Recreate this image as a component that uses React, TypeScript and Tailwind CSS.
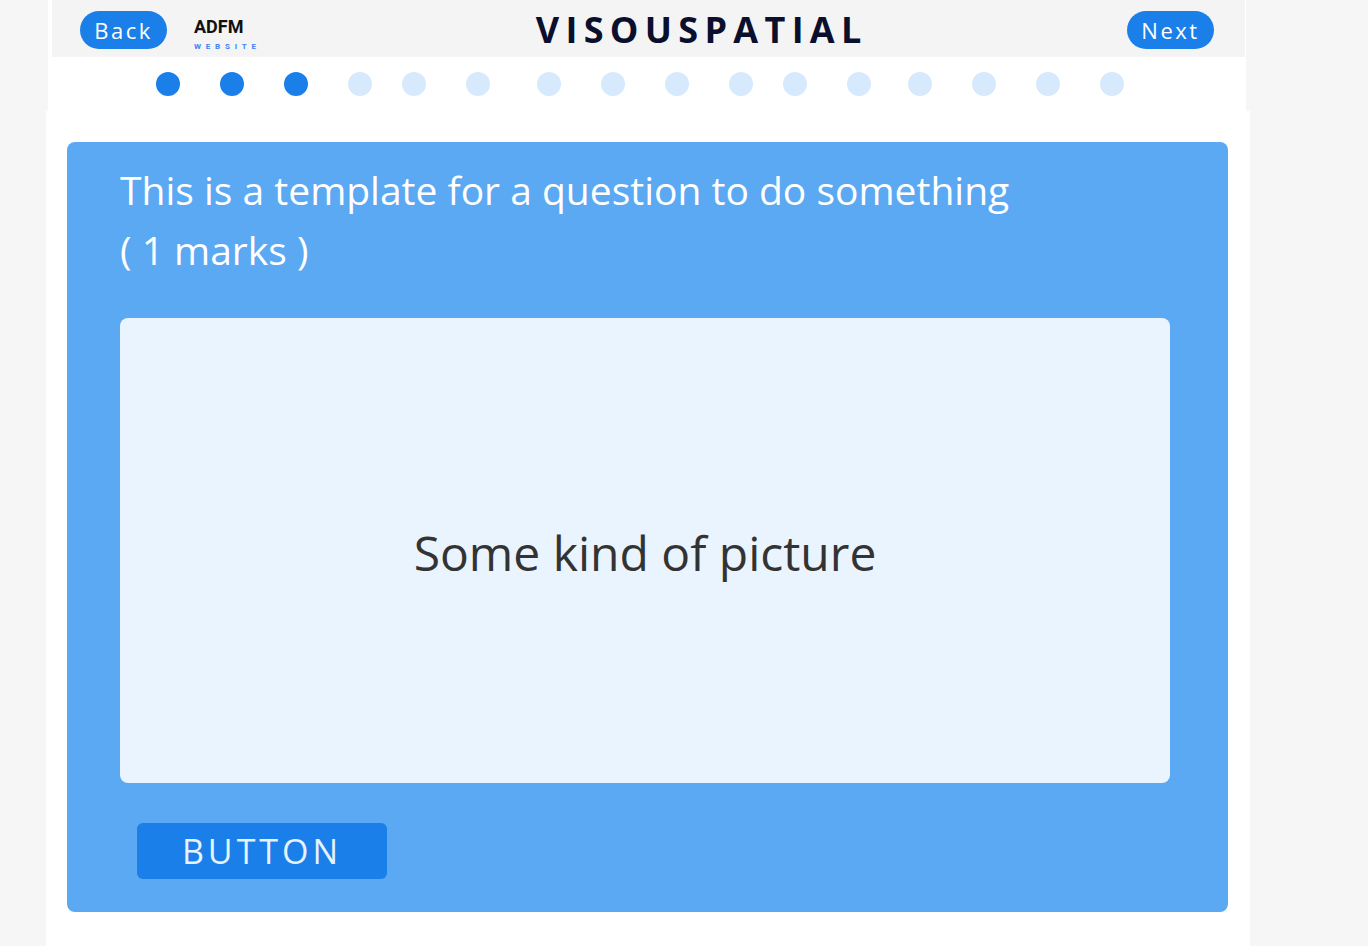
const dots = [
  { on: true, gap: "ml-0" },
  { on: true, gap: "ml-[40px]" },
  { on: true, gap: "ml-[40px]" },
  { on: false, gap: "ml-[40px]" },
  { on: false, gap: "ml-[30px]" },
  { on: false, gap: "ml-[40px]" },
  { on: false, gap: "ml-[47px]" },
  { on: false, gap: "ml-[40px]" },
  { on: false, gap: "ml-[40px]" },
  { on: false, gap: "ml-[40px]" },
  { on: false, gap: "ml-[30px]" },
  { on: false, gap: "ml-[40px]" },
  { on: false, gap: "ml-[37px]" },
  { on: false, gap: "ml-[40px]" },
  { on: false, gap: "ml-[40px]" },
  { on: false, gap: "ml-[40px]" },
];

const sans = "font-['Open_Sans',sans-serif]";

export default function App() {
  return (
    <div className="min-h-screen w-full bg-[#f6f6f6]">
      {/* Top: header + progress */}
      <div className="ml-[48px] w-[1198px] bg-white">
        <header className="ml-[4px] flex h-[57px] w-[1193px] items-center bg-[#f4f4f4]">
          <button
            className={`ml-[28px] mt-[3px] h-[38px] w-[87px] rounded-full bg-[#1a7fe8] text-[22px] tracking-[2.5px] text-white ${sans}`}
          >
            Back
          </button>
          <div className="ml-[27px] flex flex-col pt-[12px] font-['Roboto',sans-serif]">
            <span className="text-[18px] font-bold leading-[20px] text-[#111]">ADFM</span>
            <span className="mt-[5px] text-[8px] font-bold leading-[10px] tracking-[4.8px] text-[#3b82f6]">
              WEBSITE
            </span>
          </div>
          <h1
            className={`ml-[275px] mt-[2px] text-[36px] font-bold leading-none tracking-[6.3px] text-[#0b0f2e] ${sans}`}
          >
            VISOUSPATIAL
          </h1>
          <button
            className={`ml-auto mr-[31px] mt-[3px] h-[38px] w-[87px] rounded-full bg-[#1a7fe8] text-[22px] tracking-[2.5px] text-white ${sans}`}
          >
            Next
          </button>
        </header>
        <div className="flex h-[54px] items-center pl-[108px]">
          {dots.map((d, i) => (
            <span
              key={i}
              className={`h-[24px] w-[24px] rounded-full ${d.gap} ${d.on ? "bg-[#1a7fe8]" : "bg-[#d6e9fd]"}`}
            />
          ))}
        </div>
      </div>

      {/* Question panel */}
      <main className="ml-[46px] min-h-[835px] w-[1204px] bg-white pl-[21px] pt-[31px]">
        <section className="flex h-[770px] w-[1161px] flex-col rounded-[8px] bg-[#5ba8f3] pl-[53px]">
          <h2 className={`mt-[18px] text-[39px] leading-[60px] text-white ${sans}`}>
            This is a template for a question to do something
            <br />( 1 marks )
          </h2>
          <div className="mt-[38px] flex h-[465px] w-[1050px] items-center justify-center rounded-[8px] bg-[#eaf4fe]">
            <span className={`mt-[4px] text-[48px] text-[#333] ${sans}`}>Some kind of picture</span>
          </div>
          <button
            className={`ml-[17px] mt-[40px] h-[56px] w-[250px] rounded-[6px] bg-[#1a7fe8] text-[34px] tracking-[4px] text-[#e6f2fd] ${sans}`}
          >
            BUTTON
          </button>
        </section>
      </main>
    </div>
  );
}
